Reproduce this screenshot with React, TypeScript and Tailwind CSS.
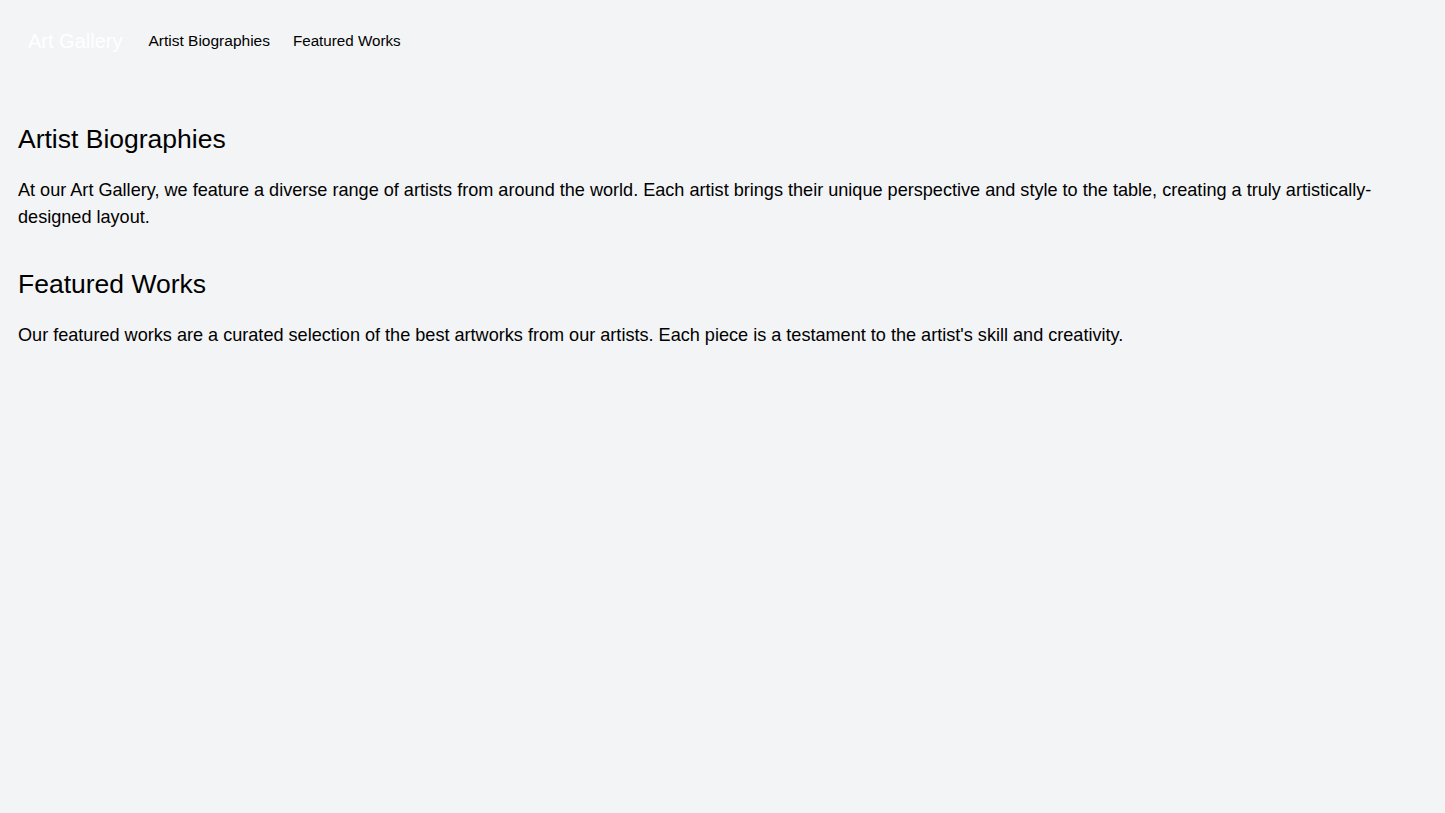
export default function App() {
  return (
    <div className="min-h-screen bg-gray-100 text-black font-['Liberation_Sans',Arial,sans-serif]">
      <nav className="flex items-center px-6 pt-[27px] pb-6">
        <a href="#" className="text-xl text-white mr-[22px] px-1">Art Gallery</a>
        <a href="#" className="text-[15.5px] leading-5 mr-[23px]">Artist Biographies</a>
        <a href="#" className="text-[15.2px] leading-5">Featured Works</a>
      </nav>

      <main className="px-[18px] pt-11">
        <section className="mb-[37px]">
          <h2 className="text-[26.5px] leading-8 mb-[22px]">Artist Biographies</h2>
          <p className="text-[18.1px] leading-[27px]">
            At our Art Gallery, we feature a diverse range of artists from around the world. Each artist brings their unique perspective and style to the table, creating a truly artistically-designed layout.
          </p>
        </section>

        <section>
          <h2 className="text-[26.5px] leading-8 mb-[22px]">Featured Works</h2>
          <p className="text-[18.1px] leading-[27px]">
            Our featured works are a curated selection of the best artworks from our artists. Each piece is a testament to the artist's skill and creativity.
          </p>
        </section>
      </main>
    </div>
  );
}
